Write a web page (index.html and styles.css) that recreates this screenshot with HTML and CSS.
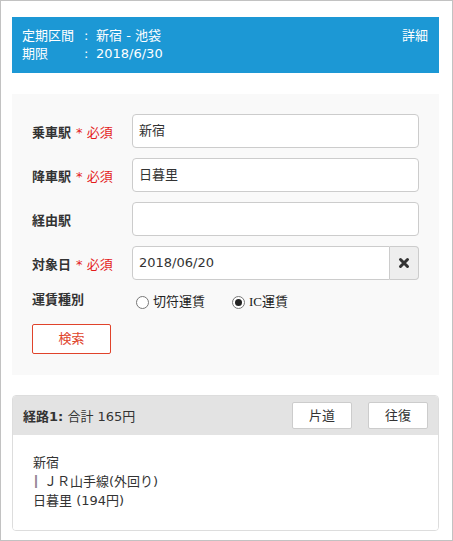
FILE: index.html
```html
<!DOCTYPE html>
<html lang="ja">
<head>
<meta charset="utf-8">
<link rel="stylesheet" href="styles.css">
</head>
<body>
<div class="frame">
  <div class="pass">
    <div class="pass-lines">
      <div class="pass-line"><span class="pass-key">定期区間</span><span class="pass-colon">:</span><span>新宿 - 池袋</span></div>
      <div class="pass-line"><span class="pass-key">期限</span><span class="pass-colon">:</span><span>2018/6/30</span></div>
    </div>
    <div class="pass-detail">詳細</div>
  </div>

  <div class="form">
    <div class="row">
      <div class="label">乗車駅<span class="req">* 必須</span></div>
      <div class="field"><div class="input">新宿</div></div>
    </div>
    <div class="row">
      <div class="label">降車駅<span class="req">* 必須</span></div>
      <div class="field"><div class="input">日暮里</div></div>
    </div>
    <div class="row">
      <div class="label">経由駅</div>
      <div class="field"><div class="input"></div></div>
    </div>
    <div class="row">
      <div class="label">対象日<span class="req">* 必須</span></div>
      <div class="field group">
        <div class="input input-left">2018/06/20</div>
        <div class="addon">
          <svg width="12" height="12" viewBox="0 0 12 12"><path d="M2.5 2.5 L9.5 9.5 M9.5 2.5 L2.5 9.5" stroke="#333" stroke-width="3" stroke-linecap="round"/></svg>
        </div>
      </div>
    </div>
    <div class="row radio-row">
      <div class="label">運賃種別</div>
      <div class="field radios">
        <span class="radio-item r1"><span class="radio"></span><span class="radio-text">切符運賃</span></span>
        <span class="radio-item"><span class="radio on"></span><span class="radio-text"><span class="latin">IC</span>運賃</span></span>
      </div>
    </div>
    <div class="btn-search">検索</div>
  </div>

  <div class="card">
    <div class="card-head">
      <div class="card-title"><b>経路1:</b> 合計 165円</div>
      <div class="card-btns">
        <div class="btn">片道</div>
        <div class="btn">往復</div>
      </div>
    </div>
    <div class="card-body">
      <div>新宿</div>
      <div><span class="bar">｜</span>ＪＲ山手線(外回り)</div>
      <div>日暮里 (194円)</div>
    </div>
  </div>
</div>
</body>
</html>
```

FILE: styles.css
```css
* { box-sizing: border-box; }
html, body { margin: 0; padding: 0; background: #fff; }
body {
  font-family: "DejaVu Sans", "Noto Sans CJK JP", sans-serif;
  font-size: 13px;
  color: #333;
}
.frame {
  width: 453px;
  height: 541px;
  border: 1px solid #c2c2c2;
  padding: 16px 13px 0 11px;
}
.pass {
  background: #1c98d5;
  color: #fff;
  height: 56px;
  padding: 10px 11px 0 10px;
  display: flex;
  justify-content: space-between;
  line-height: 18px;
}
.pass-key { display: inline-block; width: 62px; }
.pass-colon { display: inline-block; width: 12px; }
.form {
  margin-top: 21px;
  background: #f9f9f9;
  padding: 20px 20px 21px 20px;
}
.row {
  display: flex;
  align-items: center;
  margin-bottom: 10px;
}
.label {
  width: 100px;
  flex: none;
  font-weight: bold;
  color: #333;
}
.req {
  color: #e41b1b;
  font-weight: normal;
  margin-left: 5px;
}
.field { flex: 1; }
.input {
  height: 34px;
  background: #fff;
  border: 1px solid #ccc;
  border-radius: 4px;
  padding: 0 6px;
  line-height: 32px;
  font-size: 13px;
  color: #333;
}
.group { display: flex; }
.input-left {
  flex: 1;
  border-radius: 4px 0 0 4px;
}
.addon {
  width: 29px;
  height: 34px;
  background: #eee;
  border: 1px solid #ccc;
  border-left: none;
  border-radius: 0 4px 4px 0;
  display: flex;
  align-items: center;
  justify-content: center;
}
.radio-row {
  height: 24px;
  margin-bottom: 10px;
  align-items: flex-start;
}
.radio-row .label { line-height: 20px; }
.radios { display: flex; align-items: center; padding-top: 2px; }
.radio-item { display: inline-flex; align-items: center; }
.r1 { width: 96px; margin-left: 4px; }
.radio {
  width: 13px;
  height: 13px;
  border: 1px solid #777;
  border-radius: 50%;
  background: #fff;
  position: relative;
  margin-right: 4px;
}
.radio.on::after {
  content: "";
  position: absolute;
  left: 2px;
  top: 2px;
  width: 7px;
  height: 7px;
  border-radius: 50%;
  background: #222;
}
.radio-text { line-height: 20px; color: #222; }
.latin { font-family: "Liberation Serif", serif; }
.btn-search {
  width: 79px;
  height: 30px;
  border: 1px solid #e0432b;
  border-radius: 2px;
  background: #fff;
  color: #e0432b;
  text-align: center;
  line-height: 28px;
}
.card {
  margin-top: 20px;
  border: 1px solid #ddd;
  border-radius: 4px;
  overflow: hidden;
}
.card-head {
  background: #e3e3e3;
  height: 39px;
  display: flex;
  justify-content: space-between;
  align-items: center;
  padding: 0 10px 0 10px;
}
.card-title b { font-weight: bold; }
.card-btns { display: flex; gap: 16px; }
.btn {
  width: 60px;
  height: 27px;
  background: #fff;
  border: 1px solid #ccc;
  border-radius: 2px;
  text-align: center;
  line-height: 25px;
}
.card-body {
  background: #fff;
  padding: 18px 20px 20px 20px;
  line-height: 19px;
}
.bar {
  color: #333;
  text-shadow: 1px 0 0 #333;
  margin-left: -4px;
  margin-right: 2px;
}
```
